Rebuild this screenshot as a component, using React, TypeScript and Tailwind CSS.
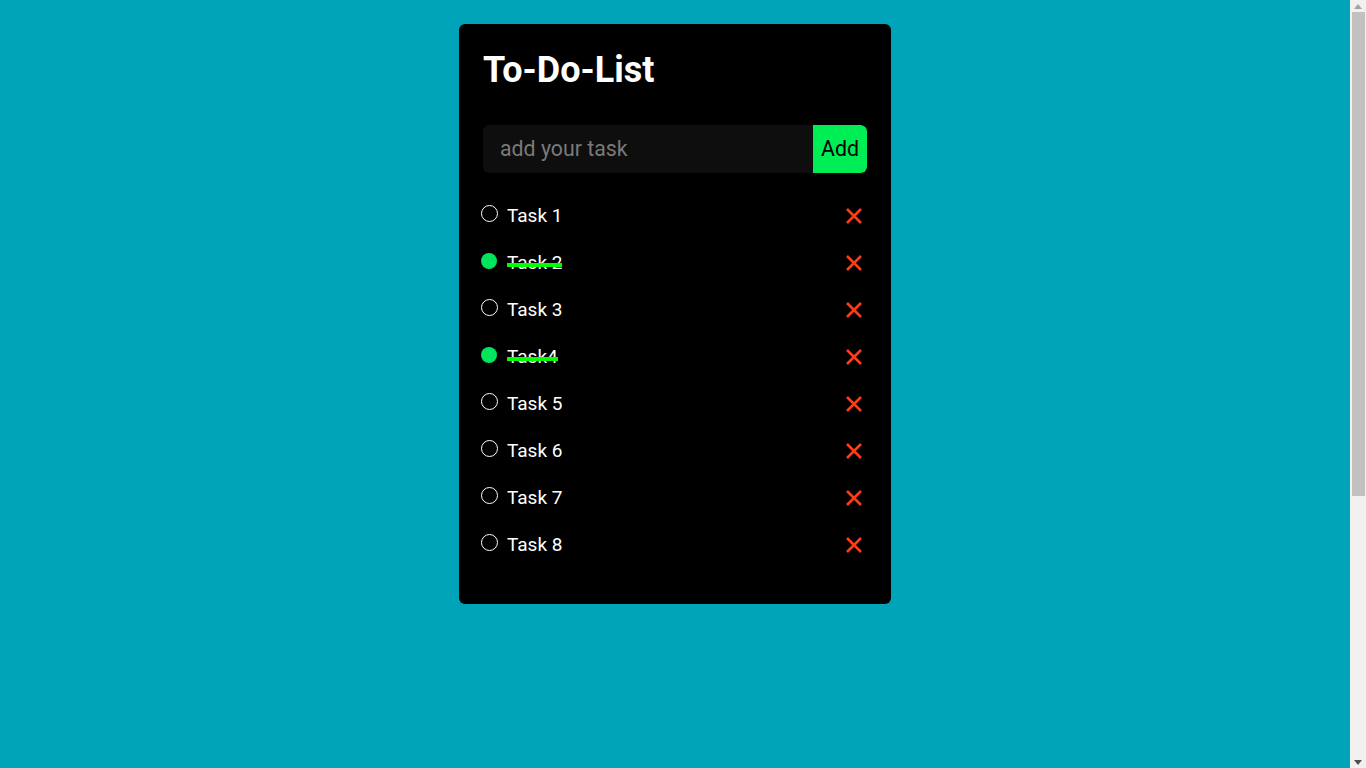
import React from "react";

const tasks = [
  { name: "Task 1", done: false },
  { name: "Task 2", done: true },
  { name: "Task 3", done: false },
  { name: "Task4", done: true },
  { name: "Task 5", done: false },
  { name: "Task 6", done: false },
  { name: "Task 7", done: false },
  { name: "Task 8", done: false },
];

function XIcon() {
  return (
    <svg width="18" height="18" viewBox="0 0 18 18" className="block">
      <path d="M2 2 L16 16 M16 2 L2 16" stroke="#ff3b1a" strokeWidth="2.6" strokeLinecap="butt" />
    </svg>
  );
}

function Scrollbar() {
  return (
    <div className="w-[16px] h-full bg-[#f1f1f1] flex flex-col items-center">
      <div className="h-[12px] flex items-center justify-center">
        <svg width="8" height="5" viewBox="0 0 8 5"><path d="M0 5 L4 0 L8 5 Z" fill="#a3a3a3" /></svg>
      </div>
      <div className="w-[13px] h-[484px] bg-[#c1c1c1] ml-[1px]" />
      <div className="flex-1" />
      <div className="h-[12px] flex items-center justify-center">
        <svg width="8" height="5" viewBox="0 0 8 5"><path d="M0 0 L4 5 L8 0 Z" fill="#505050" /></svg>
      </div>
    </div>
  );
}

export default function App() {
  return (
    <div
      className="h-[768px] w-full flex overflow-hidden"
      style={{ fontFamily: "Roboto, 'Liberation Sans', sans-serif" }}
    >
      <div className="flex-1 bg-[#00a4b8] pt-6">
        <div className="mx-auto w-[432px] h-[580px] bg-black rounded-md px-6 pt-6">
          <h1 className="text-white font-bold text-[36px] leading-[44px]">To-Do-List</h1>
          <div className="mt-[33px] flex h-[48px] rounded-md bg-[#0e0e0e] overflow-hidden">
            <div className="flex-1 flex items-center pl-[17px] text-[21.3px] text-[#7a7a7a]">add your task</div>
            <div className="w-[54px] bg-[#00ee55] flex items-center justify-center text-[21.3px] text-black rounded-r-md">Add</div>
          </div>
          <div className="mt-[19px] flex flex-col">
            {tasks.map((t) => (
              <div key={t.name} className="flex items-center h-[47px] -ml-[2px]">
                {t.done ? (
                  <div className="w-[16px] h-[16px] rounded-full bg-[#00e55c] mr-[10px] -mt-[4px]" />
                ) : (
                  <div className="w-[17px] h-[17px] rounded-full border border-white mr-[9px] -mt-[4px]" />
                )}
                <span className="relative text-white text-[19px] leading-[24px]">
                  {t.name}
                  {t.done && (
                    <span className="absolute left-0 right-0 top-[12px] h-[4px] bg-[#00ff00]" />
                  )}
                </span>
                <div className="ml-auto mr-[4px]">
                  <XIcon />
                </div>
              </div>
            ))}
          </div>
        </div>
      </div>
      <Scrollbar />
    </div>
  );
}
